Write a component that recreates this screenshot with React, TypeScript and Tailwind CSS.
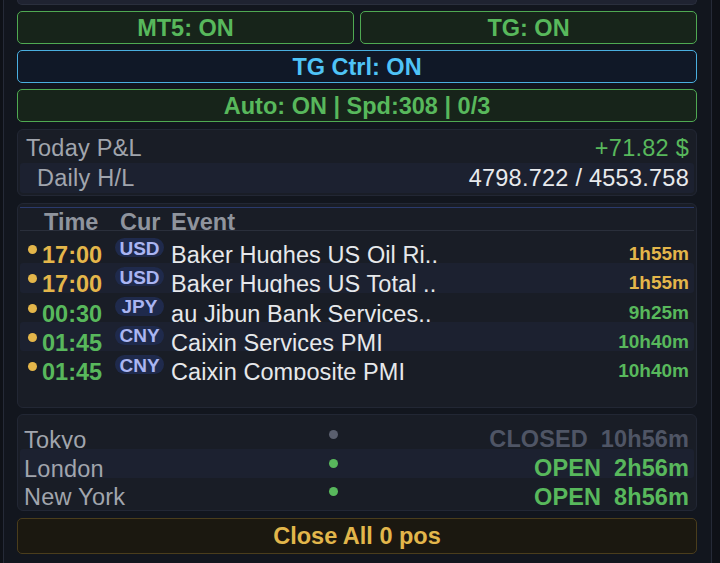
import React from "react";

const font = { fontFamily: '"Liberation Sans", Arial, sans-serif', letterSpacing: "0.25px" };

type Ev = { t: string; tc: string; cur: string; name: string; left: string; lc: string };

const events: Ev[] = [
  { t: "17:00", tc: "text-[#e4b64a]", cur: "USD", name: "Baker Hughes US Oil Ri..", left: "1h55m", lc: "text-[#e4b64a]" },
  { t: "17:00", tc: "text-[#e4b64a]", cur: "USD", name: "Baker Hughes US Total ..", left: "1h55m", lc: "text-[#e4b64a]" },
  { t: "00:30", tc: "text-[#58b85c]", cur: "JPY", name: "au Jibun Bank Services..", left: "9h25m", lc: "text-[#58b85c]" },
  { t: "01:45", tc: "text-[#58b85c]", cur: "CNY", name: "Caixin Services PMI", left: "10h40m", lc: "text-[#58b85c]" },
  { t: "01:45", tc: "text-[#58b85c]", cur: "CNY", name: "Caixin Composite PMI", left: "10h40m", lc: "text-[#58b85c]" },
];

const sessions = [
  { name: "Tokyo", open: false, st: "CLOSED", time: "10h56m" },
  { name: "London", open: true, st: "OPEN", time: "2h56m" },
  { name: "New York", open: true, st: "OPEN", time: "8h56m" },
];

export default function App() {
  return (
    <div className="h-[563px] w-[720px] overflow-hidden bg-[#0e1117]" style={font}>
      <div className="ml-[3px] flex h-full w-[709px] flex-col border-x border-[#252a37] bg-[#12161e] pl-[13px] pr-[14px]">
        {/* partially visible card at top */}
        <div className="h-[5px] rounded-b-[5px] border-x border-b border-[#2a2f3d] bg-[#1f2331]" />

        {/* MT5 / TG */}
        <div className="mt-[6px] grid grid-cols-2 gap-[6px]">
          <div className="flex h-[33px] items-center justify-center rounded-[5px] border border-[#4fa952] bg-[#17241a] pt-[2px] text-[23.5px] font-bold leading-none tracking-normal text-[#58b85c]">
            MT5: ON
          </div>
          <div className="flex h-[33px] items-center justify-center rounded-[5px] border border-[#4fa952] bg-[#17241a] pt-[2px] text-[23.5px] font-bold leading-none tracking-normal text-[#58b85c]">
            TG: ON
          </div>
        </div>
        <div className="mt-[6px] flex h-[33px] items-center justify-center rounded-[5px] border border-[#4aafe0] bg-[#101827] pt-[2px] text-[23.5px] font-bold leading-none tracking-normal text-[#4fc3f7]">
          TG Ctrl: ON
        </div>
        <div className="mt-[6px] flex h-[33px] items-center justify-center rounded-[5px] border border-[#4fa952] bg-[#17241a] pt-[2px] text-[23.5px] font-bold leading-none tracking-normal text-[#58b85c]">
          Auto: ON | Spd:308 | 0/3
        </div>

        {/* P&L */}
        <div className="mt-[7px] rounded-[6px] border border-[#222734] bg-[#191d26] px-[2px] pb-[2px] pt-[3px] text-[23.5px] leading-[30px]">
          <div className="flex h-[30px] items-center justify-between pl-[6px] pr-[5px]">
            <span className="text-[#a1a5ad]">Today P&amp;L</span>
            <span className="text-[#58b85c]">+71.82 $</span>
          </div>
          <div className="flex h-[30px] items-center justify-between rounded-[3px] bg-[#1c2130] pl-[17px] pr-[5px]">
            <span className="text-[#a1a5ad]">Daily H/L</span>
            <span className="text-[#e8eaed]">4798.722 / 4553.758</span>
          </div>
        </div>

        {/* Events */}
        <div className="mt-[7px] rounded-[6px] border border-[#222734] bg-[#191d26] px-[2px] pb-[27px] pt-[3px]">
          <div className="flex h-[24px] overflow-hidden border-y border-t-[#2a3a6c] border-b-[#2a2f3b] pl-[24px] text-[23.5px] font-bold leading-[23px] tracking-normal text-[#8f949d]">
            <span className="mt-[3px] w-[76px] shrink-0">Time</span>
            <span className="mt-[3px] w-[51px] shrink-0">Cur</span>
            <span className="mt-[3px]">Event</span>
          </div>
          <div className="mt-[3px]">
            {events.map((e, i) => (
              <div
                key={i}
                className={`flex h-[29.3px] items-start overflow-hidden rounded-[3px] pl-[8px] pr-[5px] ${
                  i % 2 === 1 ? "bg-[#1c2130]" : ""
                }`}
              >
                <span className="mt-[11px] h-[9px] w-[9px] shrink-0 rounded-full bg-[#e4b64a]" />
                <span className={`ml-[5px] mt-[10px] w-[73px] shrink-0 text-[23.5px] font-bold leading-[23px] tracking-normal ${e.tc}`}>
                  {e.t}
                </span>
                <span className="mt-[4px] flex h-[19px] w-[49px] shrink-0 items-center justify-center rounded-full bg-[#1f2a4c] pt-[1px] text-[19px] font-bold leading-none tracking-normal text-[#aab5f2]">
                  {e.cur}
                </span>
                <span className="ml-[7px] mt-[10px] whitespace-nowrap text-[23.5px] leading-[23px] tracking-[0.08px] text-[#e6e8eb]">
                  {e.name}
                </span>
                <span className={`ml-auto mt-[10px] whitespace-nowrap text-[19px] font-bold leading-[19px] tracking-normal ${e.lc}`}>
                  {e.left}
                </span>
              </div>
            ))}
          </div>
        </div>

        {/* Sessions */}
        <div className="mt-[6px] rounded-[6px] border border-[#222734] bg-[#191d26] px-[2px] pb-[3px] pt-[5px]">
          {sessions.map((s, i) => (
            <div
              key={i}
              className={`flex h-[28.7px] items-start overflow-hidden rounded-[3px] pl-[4px] pr-[5px] ${
                i === 1 ? "bg-[#1c2130]" : ""
              }`}
            >
              <span className="mt-[8.5px] w-[305px] shrink-0 text-[23.5px] leading-[23px] text-[#a1a5ad]">{s.name}</span>
              <span
                className={`mt-[9.5px] h-[9px] w-[9px] shrink-0 rounded-full ${
                  s.open ? "bg-[#58b85c]" : "bg-[#5a5f6e]"
                }`}
              />
              <span
                className={`ml-auto mt-[8px] flex gap-[13px] whitespace-nowrap text-[23.5px] font-bold leading-[23px] tracking-[0.1px] ${
                  s.open ? "text-[#58b85c]" : "text-[#4f5565]"
                }`}
              >
                <span>{s.st}</span>
                <span>{s.time}</span>
              </span>
            </div>
          ))}
        </div>

        {/* Close All */}
        <div className="mt-[7px] flex h-[36px] items-center justify-center rounded-[5px] border border-[#4a3d1c] bg-[#1b1810] pt-[2px] text-[23.5px] font-bold leading-none tracking-normal text-[#e2b64b]">
          Close All 0 pos
        </div>
      </div>
    </div>
  );
}
